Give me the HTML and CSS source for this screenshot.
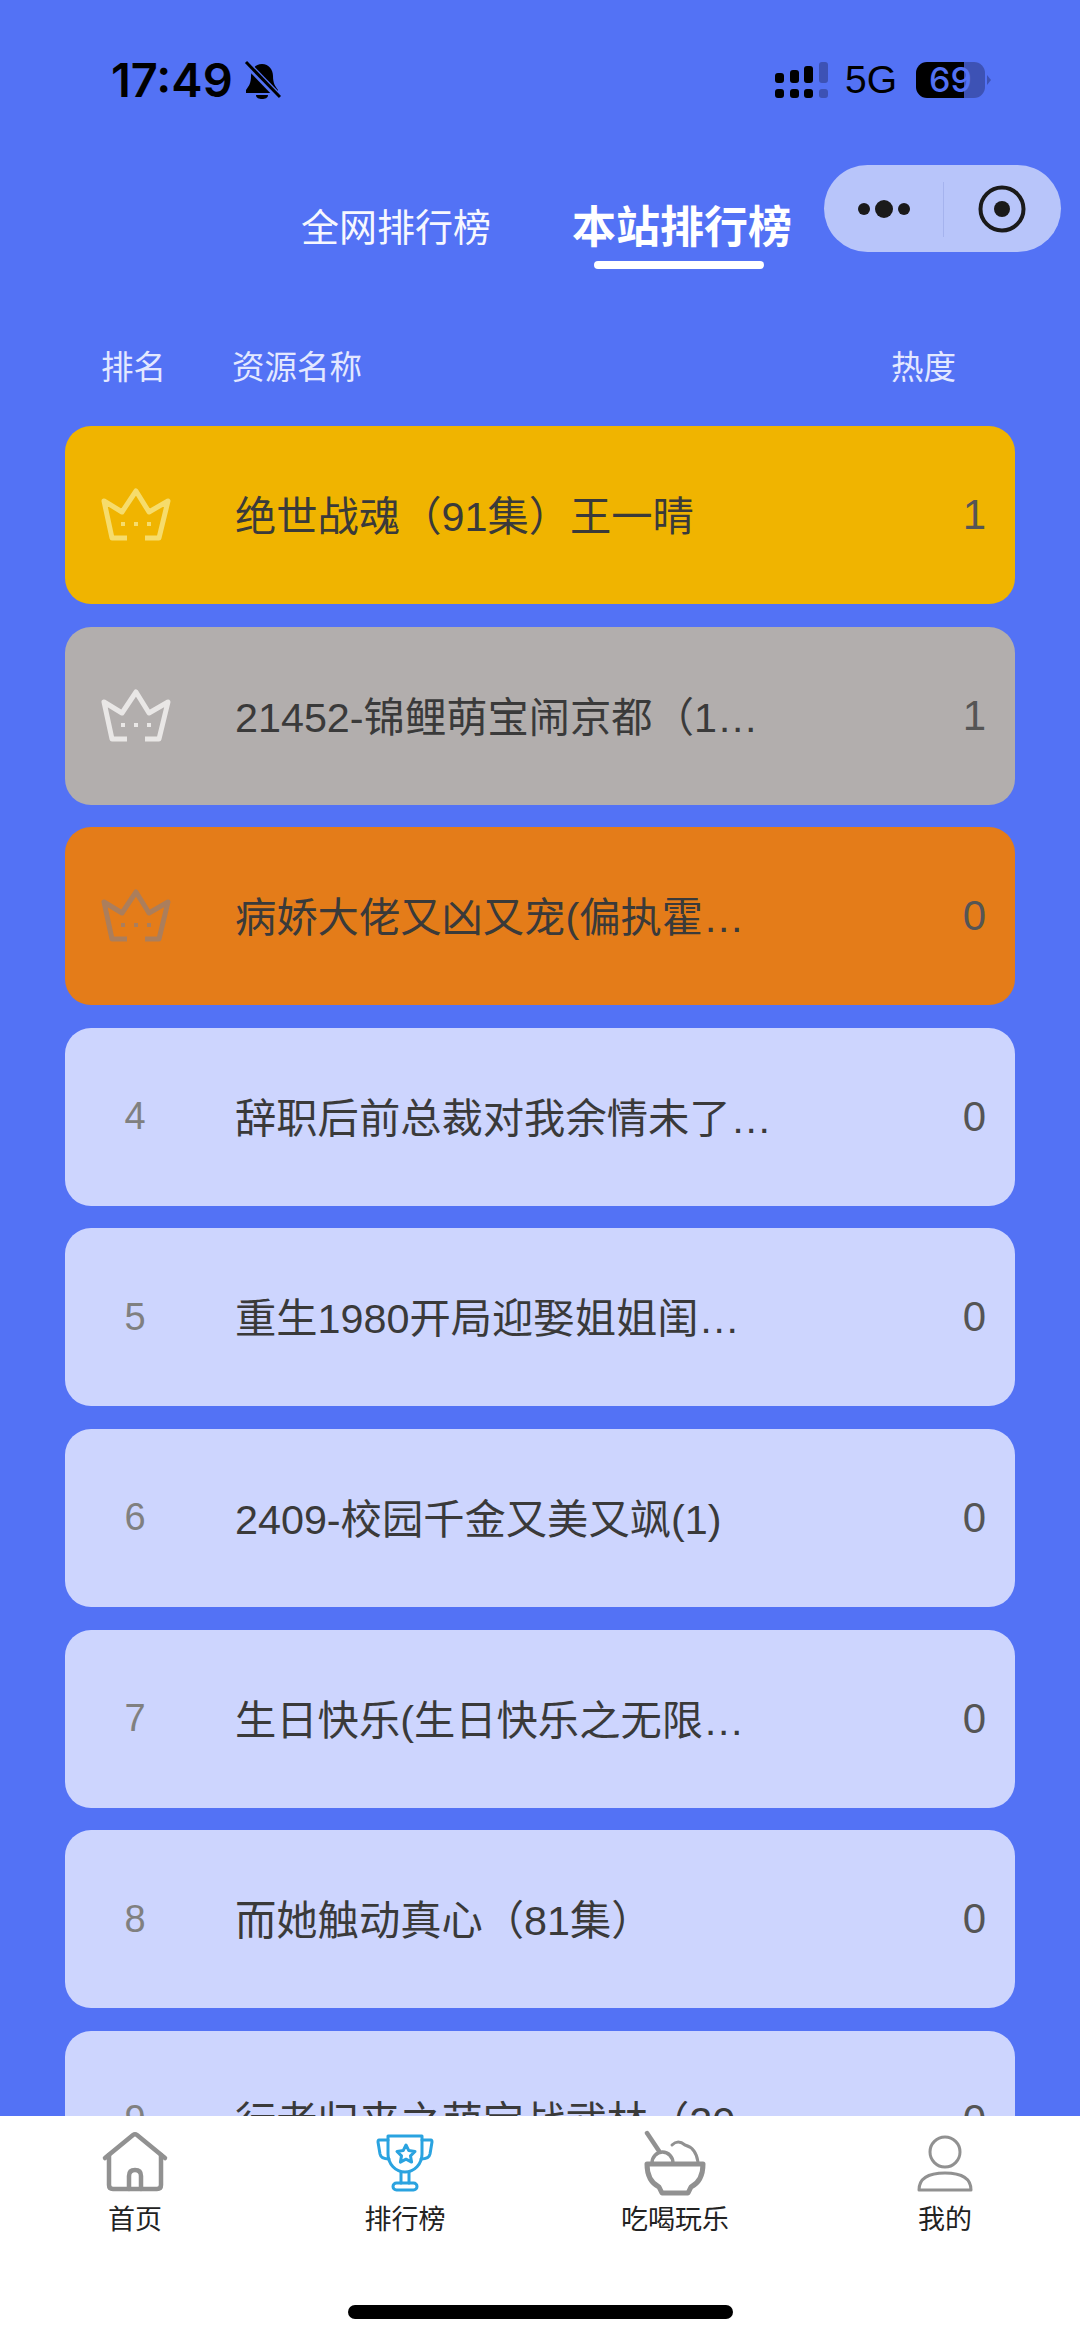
FILE: index.html
```html
<!doctype html>
<html>
<head>
    <meta charset="utf-8">
    <meta name="viewport" content="width=device-width, initial-scale=1.0, user-scalable=no"/>
    <title>排行榜</title>
    <link rel="stylesheet" href="styles.css">
</head>
<body>

<svg class="defs" width="0" height="0">
    <symbol id="crown" viewBox="0 0 70 56">
        <path d="M26 51H11L3 14L21 25L35 4L48 25L67 14L58 51H44" fill="none" stroke="currentColor" stroke-width="5" stroke-linejoin="round"/>
        <rect x="20" y="35" width="4" height="4" fill="currentColor"/>
        <rect x="33" y="35" width="4" height="4" fill="currentColor"/>
        <rect x="46" y="35" width="4" height="4" fill="currentColor"/>
    </symbol>
</svg>

<div class="page">
    <div class="status">
        <div class="status-left">
            <span class="clock">17:49</span>
            <svg class="bell" width="38" height="40" viewBox="0 0 38 40">
                <path d="M19 4c-7 0-11 6-11 12 0 7-2 10-5 14v3h32v-3c-3-4-5-7-5-14 0-6-4-12-11-12z" fill="#000"/>
                <path d="M13 35h12c0 3-3 4-6 4s-6-1-6-4z" fill="#000"/>
                <path d="M3 3L36 37" stroke="#5372f5" stroke-width="7"/>
                <path d="M3 2L37 37" stroke="#000" stroke-width="3"/>
            </svg>
        </div>
        <div class="status-right">
            <svg class="signal" width="54" height="37" viewBox="0 0 54 37">
                <rect x="0" y="11" width="9" height="10" rx="3"/>
                <rect x="15" y="8" width="9" height="13" rx="3"/>
                <rect x="29" y="4" width="9" height="17" rx="3"/>
                <rect x="44" y="0" width="9" height="21" rx="3" class="off"/>
                <rect x="0" y="27" width="9" height="9" rx="3"/>
                <rect x="15" y="27" width="9" height="9" rx="3"/>
                <rect x="29" y="27" width="9" height="9" rx="3"/>
                <rect x="44" y="27" width="9" height="9" rx="3" class="off"/>
            </svg>
            <span class="net">5G</span>
            <div class="battery"><span>69</span></div>
            <i class="battery-nub"></i>
        </div>
    </div>

    <div class="capsule">
        <div class="capsule-dots"><i></i><b></b><i></i></div>
        <svg class="capsule-target" width="50" height="50" viewBox="0 0 50 50">
            <circle cx="25" cy="25" r="21.5" fill="none" stroke="#1a1a1a" stroke-width="4"/>
            <circle cx="25" cy="25" r="8" fill="#1a1a1a"/>
        </svg>
    </div>

    <div class="tabs">
        <div class="tab">全网排行榜</div>
        <div class="tab on">本站排行榜</div>
    </div>

    <div class="head">
        <span class="head-rank">排名</span>
        <span class="head-name">资源名称</span>
        <span class="head-hot">热度</span>
    </div>

    <ul class="list">
        <li class="row gold">
            <div class="rank"><svg width="70" height="56"><use href="#crown"/></svg></div>
            <div class="name">绝世战魂（91集）王一晴</div>
            <div class="hot">1</div>
        </li>
        <li class="row silver">
            <div class="rank"><svg width="70" height="56"><use href="#crown"/></svg></div>
            <div class="name">21452-锦鲤萌宝闹京都（1…</div>
            <div class="hot">1</div>
        </li>
        <li class="row bronze">
            <div class="rank"><svg width="70" height="56"><use href="#crown"/></svg></div>
            <div class="name">病娇大佬又凶又宠(偏执霍…</div>
            <div class="hot">0</div>
        </li>
        <li class="row">
            <div class="rank">4</div>
            <div class="name">辞职后前总裁对我余情未了…</div>
            <div class="hot">0</div>
        </li>
        <li class="row">
            <div class="rank">5</div>
            <div class="name">重生1980开局迎娶姐姐闺…</div>
            <div class="hot">0</div>
        </li>
        <li class="row">
            <div class="rank">6</div>
            <div class="name">2409-校园千金又美又飒(1)</div>
            <div class="hot">0</div>
        </li>
        <li class="row">
            <div class="rank">7</div>
            <div class="name">生日快乐(生日快乐之无限…</div>
            <div class="hot">0</div>
        </li>
        <li class="row">
            <div class="rank">8</div>
            <div class="name">而她触动真心（81集）</div>
            <div class="hot">0</div>
        </li>
        <li class="row">
            <div class="rank">9</div>
            <div class="name">行者归来之萌宝战武林（20…</div>
            <div class="hot">0</div>
        </li>
    </ul>

    <div class="tabbar">
        <div class="tabbar-items">
            <div class="item">
                <svg class="icon gray" width="80" height="66" viewBox="0 0 80 66">
                    <path d="M10 28L38 5Q40 3.500 42 5L70 28" stroke-width="4.500"/>
                    <path d="M14 25V55q0 4 4 4H62q4 0 4-4V25" stroke-width="4.500"/>
                    <path d="M34 59V46q0-6 6-6t6 6V59" stroke-width="4.500"/>
                </svg>
                <span>首页</span>
            </div>
            <div class="item">
                <svg class="icon blue" width="80" height="66" viewBox="0 0 80 66">
                    <path d="M23 6H57V24a17 18 0 0 1-34 0Z"/>
                    <path d="M23 10H14q-1 0-1 2l2 12q1 5 9 5"/>
                    <path d="M57 10H66q1 0 1 2l-2 12q-1 5-9 5"/>
                    <path d="M36 42V53M44 42V53"/>
                    <rect x="28" y="53" width="24" height="7" rx="3.500"/>
                    <path d="M41 15l2.800 5.600 6.200.9-4.500 4.400 1.100 6.200-5.600-2.900-5.600 2.900 1.100-6.200-4.500-4.400 6.200-.9Z"/>
                </svg>
                <span>排行榜</span>
            </div>
            <div class="item">
                <svg class="icon gray" width="80" height="66" viewBox="0 0 80 66">
                    <path d="M12 3L24 21" stroke-width="4.500"/>
                    <path d="M17 33a10.500 11 0 1 1 21 0" stroke-width="3.500"/>
                    <path d="M37 15Q43 9 50 15Q61 18 63 32" stroke-width="3"/>
                    <path d="M12 34H68Q68 51 56 57l-3 6H27l-3-6Q12 51 12 34Z" stroke-width="5"/>
                </svg>
                <span>吃喝玩乐</span>
            </div>
            <div class="item">
                <svg class="icon gray" width="80" height="66" viewBox="0 0 80 66">
                    <circle cx="40" cy="22" r="15" stroke-width="3"/>
                    <path d="M14 60Q14 43 40 43Q66 43 66 60Z" stroke-width="3"/>
                </svg>
                <span>我的</span>
            </div>
        </div>
        <div class="home-bar"></div>
    </div>
</div>

</body>
</html>
```

FILE: styles.css
```css
*{margin: 0; padding: 0; box-sizing: border-box;}
html,body{width: 100%; height: 100%; overflow: hidden;}
body{background-color: #5372F5; font-family: "Liberation Sans", "Noto Sans CJK SC", sans-serif;}
.defs{position: absolute;}
.page{width: 1080px; height: 2341px; overflow: hidden; position: relative;}

.status{height: 160px; display: flex; justify-content: space-between; align-items: center; padding: 0 89px 0 111px;}
.status-left, .status-right{display: flex; align-items: center;}
.clock{font-family: Inter, sans-serif; font-size: 47px; font-weight: 600; color: #000; line-height: 40px;}
.bell{margin-left: 10px;}
.signal{fill: #000;}
.signal .off{fill: #3D52B5;}
.net{font-size: 39px; color: #000; margin: 0 19px 0 16px;}
.battery{width: 69px; height: 36px; border-radius: 11px; background: linear-gradient(to right, #000 70%, #3D52B5 70%); text-align: center; line-height: 36px; font-family: Inter, sans-serif; font-size: 34px; font-weight: 500; color: #5372F5;}
.battery-nub{width: 0; height: 0; margin-left: 2px; border-left: 4px solid #3D52B5; border-top: 5px solid transparent; border-bottom: 5px solid transparent;}

.capsule{position: absolute; left: 824px; top: 165px; width: 237px; height: 87px; border-radius: 44px; background: #B8C5FA; display: flex; align-items: center;}
.capsule:after{content: ""; position: absolute; left: 119px; top: 17px; width: 1px; height: 55px; background: #A5B3EE;}
.capsule-dots{width: 119px; display: flex; align-items: center; justify-content: center; gap: 5px;}
.capsule-dots i{width: 12px; height: 12px; border-radius: 50%; background: #1a1a1a;}
.capsule-dots b{width: 18px; height: 18px; border-radius: 50%; background: #1a1a1a;}
.capsule-target{margin-left: 34px;}

.tabs{display: flex; align-items: flex-start; gap: 81px; padding: 40px 0 0 301px; height: 109px;}
.tab{position: relative; font-size: 38px; line-height: 56px; color: #fff; opacity: .95; white-space: nowrap;}
.tab.on{font-size: 44px; font-weight: bold; opacity: 1;}
.tab.on:after{content: ""; position: absolute; left: 22px; top: 61px; width: 170px; height: 8px; border-radius: 4px; background: #fff;}

.head{display: flex; align-items: center; height: 44px; margin-top: 73px; padding: 0 65px; font-size: 32.5px; color: #E3E8FF;}
.head-rank{width: 36px; margin-left: 36px; white-space: nowrap;}
.head-name{flex: 1; margin-left: 95px;}
.head-hot{margin-right: 59px;}

.list{list-style: none; display: flex; flex-direction: column; gap: 22.6px; margin: 40px 65px 0;}
.row{flex: none; height: 178px; border-radius: 26px; background: #CDD5FE; display: flex; align-items: center; color: #3A3A3A;}
.row.gold{background: #F0B400;}
.row.silver{background: #B2AEAD;}
.row.bronze{background: #E47C19;}
.rank{width: 140px; flex: none; display: flex; justify-content: center; font-size: 38px; color: #808080;}
.rank svg{margin-left: 2px;}
.gold .rank{color: #F6DC6C;}
.silver .rank{color: #E9E7E6;}
.bronze .rank{color: #AB7E5C;}
.name{margin: -4px 0 0 30px; font-size: 41.3px; white-space: nowrap;}
.hot{flex: 1; padding-right: 29px; text-align: right; font-size: 42px; color: #555;}

.tabbar{position: absolute; left: 0; right: 0; bottom: 0; height: 225px; background: #fff;}
.tabbar-items{display: grid; grid-template-columns: repeat(4, 1fr); padding-top: 14px;}
.item{display: flex; flex-direction: column; align-items: center; font-size: 27px; line-height: 36px; color: #222;}
.item span{margin-top: 6px;}
.icon{fill: none; stroke-linecap: round; stroke-linejoin: round;}
.icon.gray{stroke: #919191;}
.icon.blue{stroke: #2AA3E0; stroke-width: 3;}
.home-bar{position: absolute; left: 348px; bottom: 22px; width: 385px; height: 14px; border-radius: 7px; background: #000;}
```
